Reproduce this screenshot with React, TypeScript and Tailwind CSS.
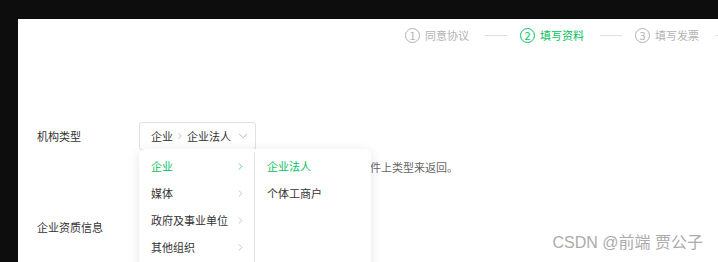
import { ChevronDown, ChevronRight } from "lucide-react";

const font = { fontFamily: '"Noto Sans CJK SC", "Noto Sans", sans-serif' };

const steps = [
  { n: 1, label: "同意协议", active: false },
  { n: 2, label: "填写资料", active: true },
  { n: 3, label: "填写发票", active: false },
];

const level1 = ["企业", "媒体", "政府及事业单位", "其他组织"];
const level2 = ["企业法人", "个体工商户"];

export default function App() {
  return (
    <div className="w-[718px] h-[262px] overflow-hidden bg-[#0d0d0d] pt-[19px] pl-[18px]" style={font}>
      <div className="relative h-full bg-white text-[11px] text-[#333]">
        {/* steps */}
        <div className="flex items-center justify-end h-[32px] -mr-[32px]">
          {steps.map((s) => (
            <div key={s.n} className="flex items-center">
              <div className={`flex items-center gap-[5px] ${s.active ? "text-[#07c160]" : "text-[#b2b2b2]"}`}>
                <span
                  className={`flex items-center justify-center w-[15px] h-[15px] rounded-full border text-[11px] leading-none ${
                    s.active ? "border-[#07c160]" : "border-[#b2b2b2]"
                  }`}
                >
                  {s.n}
                </span>
                <span>{s.label}</span>
              </div>
              <div className="w-[22px] h-px bg-[#e0e0e0] ml-[16px] mr-[13px]" />
            </div>
          ))}
        </div>

        {/* form */}
        <div className="pl-[19px] pt-[71px]">
          <div className="flex items-start">
            <div className="w-[102px] shrink-0 leading-[28px] h-[28px]">机构类型</div>
            <div className="relative">
              <div className="flex items-center justify-between w-[117px] h-[28px] border border-[#e0e0e0] rounded-[3px] pl-[11px] pr-[5px] whitespace-nowrap">
                <span className="flex items-center gap-[2px]">
                  企业
                  <ChevronRight className="w-[10px] h-[10px] text-[#999]" strokeWidth={1.5} />
                  企业法人
                </span>
                <ChevronDown className="w-[14px] h-[14px] text-[#aaa]" strokeWidth={1.5} />
              </div>
              <div className="mt-[9px] leading-[16px] text-[#666] whitespace-nowrap">
                请选择与您的营业执照一致的机构类型，将按证件上类型来返回。
              </div>

              {/* cascader dropdown */}
              <div className="absolute left-0 top-[27px] z-10 flex w-[232px] h-[200px] bg-white rounded-[6px] shadow-[0_2px_12px_rgba(0,0,0,0.1)] pt-[4px]">
                <div className="w-[116px] border-r border-[#e4e4e4]">
                  {level1.map((t, i) => (
                    <div
                      key={t}
                      className={`flex items-center justify-between h-[27px] pl-[12px] pr-[8px] whitespace-nowrap ${
                        i === 0 ? "text-[#07c160]" : "text-[#333]"
                      }`}
                    >
                      <span>{t}</span>
                      <ChevronRight
                        className={`w-[11px] h-[11px] ${i === 0 ? "text-[#07c160]" : "text-[#aaa]"}`}
                        strokeWidth={1.5}
                      />
                    </div>
                  ))}
                </div>
                <div className="w-[116px]">
                  {level2.map((t, i) => (
                    <div
                      key={t}
                      className={`flex items-center h-[27px] pl-[12px] ${i === 0 ? "text-[#07c160]" : "text-[#333]"}`}
                    >
                      {t}
                    </div>
                  ))}
                </div>
              </div>
            </div>
          </div>
          <div className="mt-[38px] leading-[28px]">企业资质信息</div>
        </div>

        <div
          className="absolute right-[15px] bottom-[7px] text-[16px] text-[#ababab] z-20"
          style={{ fontFamily: '"Liberation Sans", "Noto Sans CJK SC", sans-serif' }}
        >
          CSDN @前端 贾公子
        </div>
      </div>
    </div>
  );
}
